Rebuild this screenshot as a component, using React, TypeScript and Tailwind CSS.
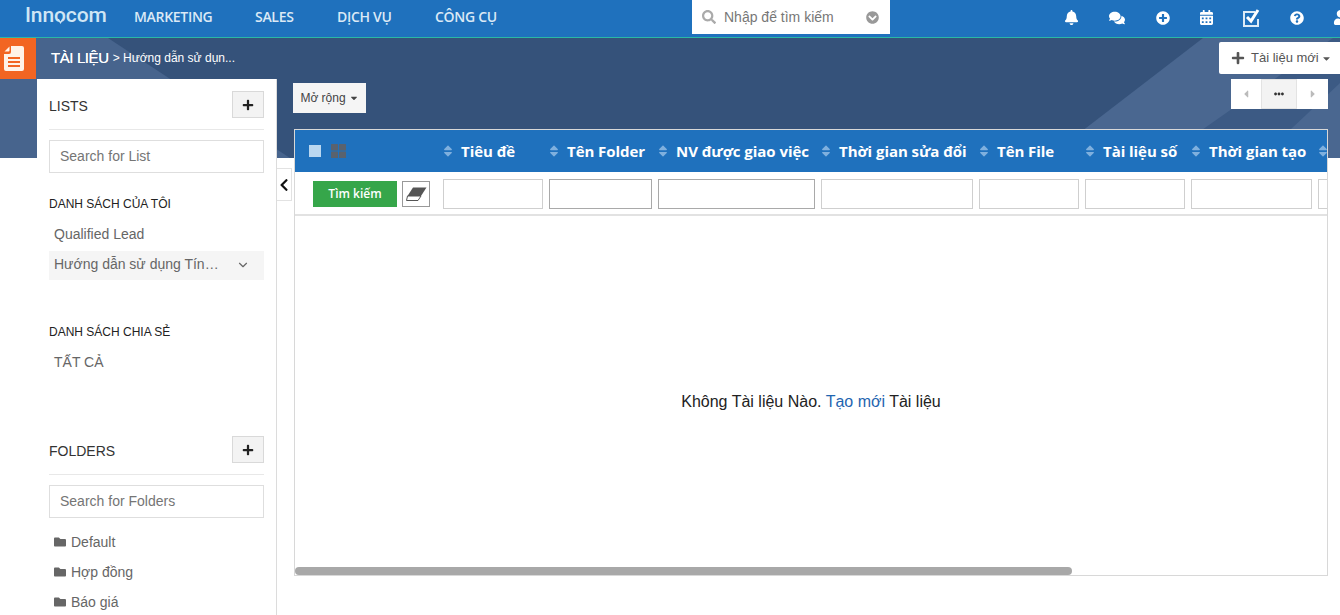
import {
  FaBell,
  FaCaretDown,
  FaCaretLeft,
  FaCaretRight,
  FaChevronCircleDown,
  FaChevronLeft,
  FaCalendarAlt,
  FaComments,
  FaEllipsisH,
  FaFolder,
  FaPlus,
  FaPlusCircle,
  FaQuestionCircle,
  FaSearch,
  FaSort,
  FaUser,
} from 'react-icons/fa';
import { ChevronDown } from 'lucide-react';

const navItems = [
  { label: 'MARKETING', width: 'w-[121px]' },
  { label: 'SALES', width: 'w-[82px]' },
  { label: 'DỊCH VỤ', width: 'w-[98px]' },
  { label: 'CÔNG CỤ', width: 'w-[90px]' },
];

const columns = [
  { title: 'Tiêu đề', width: 'w-[100px]', border: 'border-[#cfcfcf]' },
  { title: 'Tên Folder', width: 'w-[103px]', border: 'border-[#a9a9a9]' },
  { title: 'NV được giao việc', width: 'w-[157px]', border: 'border-[#a9a9a9]' },
  { title: 'Thời gian sửa đổi', width: 'w-[152px]', border: 'border-[#cfcfcf]' },
  { title: 'Tên File', width: 'w-[100px]', border: 'border-[#cfcfcf]' },
  { title: 'Tài liệu số', width: 'w-[100px]', border: 'border-[#cfcfcf]' },
  { title: 'Thời gian tạo', width: 'w-[121px]', border: 'border-[#cfcfcf]' },
  { title: '', width: 'w-[100px]', border: 'border-[#cfcfcf]' },
];

function SectionHeader({ title }: { title: string }) {
  return (
    <div className="flex h-[51px] items-start justify-between border-b border-[#e8e8e8] pt-[12px]">
      <span className="pt-[7px] text-[14px] leading-[16px] text-[#333]">{title}</span>
      <button className="flex h-[27px] w-[32px] items-center justify-center border border-[#d9d9d9] bg-[#f3f3f3] text-[#222]">
        <FaPlus className="h-[12px] w-[12px]" />
      </button>
    </div>
  );
}

function SearchBox({ placeholder }: { placeholder: string }) {
  return (
    <div className="mt-[10px] flex h-[33px] items-center border border-[#dedede] pl-[10px] text-[14px] text-[#757575]">
      {placeholder}
    </div>
  );
}

function Sidebar() {
  return (
    <aside className="h-[536px] w-[240px] shrink-0 overflow-hidden border-r border-[#dcdcdc] bg-white pl-[12px] pr-[12px]">
      <SectionHeader title="LISTS" />
      <SearchBox placeholder="Search for List" />
      <div className="mt-[23px] text-[12px] leading-[16px] text-[#222]">DANH SÁCH CỦA TÔI</div>
      <div className="mt-[7px] flex h-[30px] items-center pl-[5px] text-[14px] text-[#666]">Qualified Lead</div>
      <div className="mt-[2px] flex h-[29px] items-center justify-between bg-[#f5f5f5] pb-[2px] pl-[5px] pr-[14px] text-[14px] text-[#666]">
        <span>Hướng dẫn sử dụng Tín…</span>
        <ChevronDown className="h-[14px] w-[14px]" />
      </div>
      <div className="mt-[44px] text-[12px] leading-[16px] text-[#222]">DANH SÁCH CHIA SẺ</div>
      <div className="mt-[7px] flex h-[30px] items-center pl-[5px] text-[14px] text-[#666]">TẤT CẢ</div>
      <div className="mt-[47px]">
        <SectionHeader title="FOLDERS" />
      </div>
      <SearchBox placeholder="Search for Folders" />
      <div className="mt-[9px]">
        {['Default', 'Hợp đồng', 'Báo giá'].map((name) => (
          <div key={name} className="flex h-[30px] items-center gap-[5px] pl-[5px] text-[14px] text-[#666]">
            <FaFolder className="h-[12px] w-[12px] text-[#666]" />
            {name}
          </div>
        ))}
      </div>
    </aside>
  );
}

function GridIcon() {
  return (
    <svg className="ml-[10px] h-[14px] w-[15px]" viewBox="0 0 15 14" fill="#59626e">
      <rect x="0" y="0" width="7" height="6.5" rx="0.5" />
      <rect x="8" y="0" width="7" height="6.5" rx="0.5" />
      <rect x="0" y="7.5" width="7" height="6.5" rx="0.5" />
      <rect x="8" y="7.5" width="7" height="6.5" rx="0.5" />
    </svg>
  );
}

function EraserIcon() {
  return (
    <svg className="h-[14px] w-[21px]" viewBox="0 0 21 14">
      <polygon points="7,0.5 20.5,0.5 15,9 1.5,9" fill="#555" />
      <polygon points="1.5,9 15,9 12,13.5 0.5,13.5" fill="#fff" stroke="#555" strokeWidth="1" />
    </svg>
  );
}

function DocIcon() {
  return (
    <svg className="h-[25px] w-[20px]" viewBox="0 0 20 25">
      <path d="M7 0h11a2 2 0 0 1 2 2v21a2 2 0 0 1-2 2H2a2 2 0 0 1-2-2V8h5a2 2 0 0 0 2-2z" fill="#fff3e8" />
      <path d="M5.5 0.5v4a1 1 0 0 1-1 1h-4z" fill="#fff3e8" />
      <rect x="4" y="11" width="12" height="2" fill="#f26522" />
      <rect x="4" y="15" width="12" height="2" fill="#f26522" />
      <rect x="4" y="19" width="12" height="2" fill="#f26522" />
    </svg>
  );
}

function DocumentTable() {
  return (
    <div className="relative h-[447px] w-[1034px] overflow-hidden border border-[#d8d8d8] bg-white">
      <div className="flex h-[42px] items-center bg-[#1f71bd] text-white">
        <div className="flex w-[148px] shrink-0 items-center pl-[14px]">
          <span className="h-[12px] w-[12px] bg-[#b9d7f0]" />
          <GridIcon />
        </div>
        {columns.map((col) => (
          <div key={col.title || 'more'} className={`${col.width} mr-[6px] flex shrink-0 items-center`}>
            <FaSort className="mr-[8px] h-[14px] w-[10px] shrink-0 text-[#7fb0de]" />
            <span className="whitespace-nowrap font-['Open_Sans',sans-serif] text-[15px] font-bold tracking-[-0.05px]">{col.title}</span>
          </div>
        ))}
      </div>
      <div className="flex h-[44px] items-start border-b-2 border-[#e2e2e2] pt-[7px]">
        <div className="flex w-[148px] shrink-0 items-center pl-[18px] pt-[2px]">
          <button className="flex h-[26px] w-[84px] items-center justify-center bg-[#36a64a] font-['Open_Sans',sans-serif] text-[12px] font-semibold text-white">
            Tìm kiếm
          </button>
          <button className="ml-[5px] flex h-[26px] w-[28px] items-center justify-center border border-[#999]">
            <EraserIcon />
          </button>
        </div>
        {columns.map((col) => (
          <div key={col.title || 'more'} className={`${col.width} ${col.border} mr-[6px] h-[30px] shrink-0 border`} />
        ))}
      </div>
      <div className="flex h-[359px] items-center justify-center pt-[13px] text-[16px] text-[#222]">
        <span>
          Không Tài liệu Nào. <span className="text-[#1f65b0]">Tạo mới</span> Tài liệu
        </span>
      </div>
      <div className="absolute bottom-0 left-0 h-[8px] w-[777px] rounded-full bg-[#a8a8a8]" />
    </div>
  );
}

export default function App() {
  return (
    <div className="relative h-[615px] w-[1340px] overflow-hidden bg-white font-['Liberation_Sans',Arial,sans-serif]">
      <header className="flex h-[38px] items-center border-b border-[#2ab8a5] bg-[#1f71bd] text-white">
        <div className="relative w-[134px] shrink-0 pb-[7px] pl-[25px] font-['Roboto',sans-serif] text-[21px] font-medium leading-[24px] tracking-[-0.1px] text-[#cfe6f5]">
          Innocom
          <svg className="absolute left-[57px] top-[16px] h-[5px] w-[7px]" viewBox="0 0 7 5">
            <polygon points="0.5,0 6.5,0 3.5,5" fill="#cfe6f5" />
            <polygon points="2,0 5,0 3.5,2.5" fill="#1f71bd" />
          </svg>
        </div>
        <nav className="flex w-[558px] shrink-0 pb-[4px]">
          {navItems.map((item) => (
            <span key={item.label} className={`${item.width} font-['Open_Sans',sans-serif] text-[14px] font-semibold tracking-[-0.3px] text-[#dbe9f6]`}>
              {item.label}
            </span>
          ))}
        </nav>
        <div className="mb-[3px] flex h-[34px] w-[198px] shrink-0 items-center bg-white pl-[10px] pr-[11px] text-[14px] text-[#777]">
          <FaSearch className="h-[14px] w-[14px] text-[#aaa]" />
          <span className="ml-[8px] flex-1">Nhập để tìm kiếm</span>
          <FaChevronCircleDown className="h-[13px] w-[13px] text-[#999]" />
        </div>
        <div className="flex flex-1 items-center pb-[2px] pl-[174px]">
          <FaBell className="h-[15px] w-[15px] shrink-0" />
          <FaComments className="ml-[30px] h-[16px] w-[16px] shrink-0" />
          <FaPlusCircle className="ml-[31px] h-[14px] w-[14px] shrink-0" />
          <FaCalendarAlt className="ml-[30px] h-[15px] w-[13px] shrink-0" />
          <svg className="ml-[30px] h-[18px] w-[18px] shrink-0" viewBox="0 0 18 18" fill="none">
            <path d="M12 3H1v14h14V10" stroke="#dcebf7" strokeWidth="2" />
            <path d="M4 8l4 4 7-11" stroke="#fff" strokeWidth="3" />
          </svg>
          <FaQuestionCircle className="ml-[29px] h-[14px] w-[14px] shrink-0" />
          <FaUser className="ml-[29px] h-[15px] w-[15px] shrink-0" />
        </div>
      </header>

      <div className="relative">
        <div className="absolute left-0 right-0 top-0 h-[120px] overflow-hidden bg-[#35527a]">
          <svg className="h-full w-full" viewBox="0 0 1340 120" preserveAspectRatio="none">
            <polygon points="0,0 108,0 290,120 0,120" fill="#47648d" />
            <polygon points="1203,0 1340,0 1340,120 1047,120" fill="#4a6790" />
            <polygon points="1162,120 1333,0 1340,0 1340,45 1260,120" fill="#3c5a84" />
          </svg>
        </div>
        <div className="absolute left-0 top-0 flex h-[41px] w-[36px] items-center justify-center bg-[#f26522] pr-[8px]">
          <DocIcon />
        </div>

        <div className="relative flex h-[41px] items-start justify-between pl-[51px]">
          <div className="flex items-center pt-[10px] text-white">
            <span className="text-[15px] leading-[20px] tracking-[-0.4px] [text-shadow:0_0_0.6px_#fff]">TÀI LIỆU</span>
            <span className="ml-[4px] text-[12px] leading-[20px]">{'>'} Hướng dẫn sử dụn...</span>
          </div>
          <button className="mt-[4px] flex h-[32px] w-[121px] items-center rounded-l-[2px] bg-white pl-[12px] text-[13px] text-[#555]">
            <FaPlus className="mr-[6px] h-[14px] w-[14px] text-[#555]" />
            Tài liệu mới
            <FaCaretDown className="ml-[2px] h-[11px] w-[11px]" />
          </button>
        </div>

        <div className="relative flex pl-[37px]">
          <Sidebar />
          <div className="relative w-[17px] shrink-0">
            <button className="absolute left-0 top-[89px] flex h-[33px] w-[15px] items-center justify-center border border-l-0 border-[#e2e2e2] bg-white text-[#111]">
              <FaChevronLeft className="h-[14px] w-[12px]" />
            </button>
          </div>
          <div className="w-[1034px]">
            <div className="flex h-[50px] items-start justify-between">
              <button className="ml-[-1px] mt-[4px] flex h-[30px] w-[73px] items-center justify-center gap-[3px] bg-[#f5f5f5] text-[12px] text-[#444]">
                Mở rộng
                <FaCaretDown className="h-[10px] w-[10px]" />
              </button>
              <div className="flex h-[30px] w-[97px] bg-white text-[#bbb]">
                <span className="flex w-[30px] items-center justify-center">
                  <FaCaretLeft className="h-[12px] w-[12px]" />
                </span>
                <span className="flex w-[36px] items-center justify-center border border-[#e3e3e3] bg-[#f3f3f3] text-[#333]">
                  <FaEllipsisH className="h-[10px] w-[10px]" />
                </span>
                <span className="flex w-[31px] items-center justify-center">
                  <FaCaretRight className="h-[12px] w-[12px]" />
                </span>
              </div>
            </div>
            <DocumentTable />
          </div>
        </div>
      </div>
    </div>
  );
}
